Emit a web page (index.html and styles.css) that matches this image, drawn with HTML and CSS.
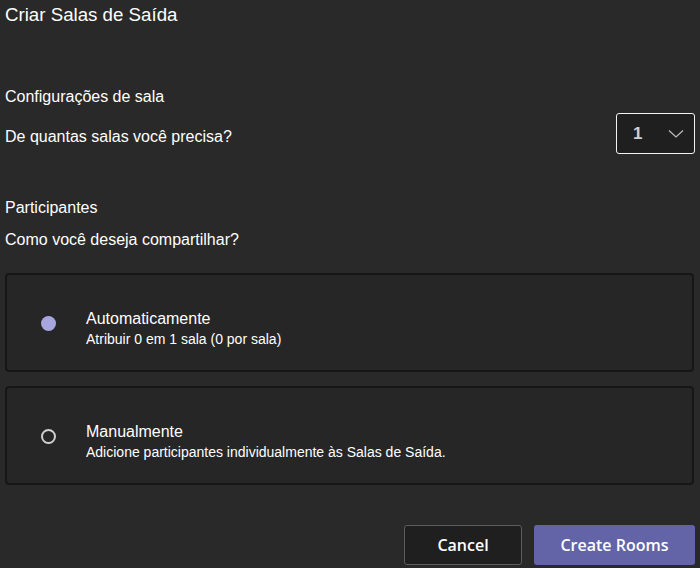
FILE: index.html
```html
<!DOCTYPE html>
<html lang="pt">
<head>
    <meta charset="UTF-8">
    <title>Criar Salas de Saída</title>
    <link rel="stylesheet" href="styles.css">
</head>
<body>
<div class="dialog">
    <h1 class="title">Criar Salas de Saída</h1>

    <div class="section rooms">
        <div class="label">Configurações de sala</div>
        <div class="row">
            <div class="question">De quantas salas você precisa?</div>
            <div class="select">
                <span class="num">1</span>
                <svg width="16" height="10" viewBox="0 0 16 10"><path d="M1 1.5 L8 8 L15 1.5" fill="none" stroke="#bdbdbd" stroke-width="1.2"/></svg>
            </div>
        </div>
    </div>

    <div class="section people">
        <div class="label">Participantes</div>
        <div class="question">Como você deseja compartilhar?</div>
    </div>

    <!--opções de atribuição-->
    <div class="option">
        <span class="radio on"></span>
        <div class="opt-text">
            <div class="opt-title">Automaticamente</div>
            <div class="opt-sub">Atribuir 0 em 1 sala (0 por sala)</div>
        </div>
    </div>
    <div class="option">
        <span class="radio"></span>
        <div class="opt-text">
            <div class="opt-title">Manualmente</div>
            <div class="opt-sub">Adicione participantes individualmente às Salas de Saída.</div>
        </div>
    </div>

    <div class="actions">
        <button class="btn cancel">Cancel</button>
        <button class="btn create">Create Rooms</button>
    </div>
</div>
</body>
</html>
```

FILE: styles.css
```css
* {
    margin: 0;
    padding: 0;
    box-sizing: border-box;
}

body {
    background-color: #292929;
    color: #ffffff;
    font-family: "Liberation Sans", Arial, sans-serif;
}

.dialog {
    padding: 0 6px 0 5px;
    height: 568px;
}

.title {
    font-size: 18.7px;
    font-weight: normal;
    line-height: 22px;
    padding-top: 4px;
}

.section {
    font-size: 16px;
}

.rooms {
    margin-top: 61px;
}

.label {
    line-height: 20px;
}

.row {
    display: flex;
    align-items: center;
    justify-content: space-between;
    margin-top: 6px;
}

.row .question {
    margin-top: 6px;
}

.question {
    line-height: 20px;
}

.select {
    width: 79px;
    height: 41px;
    border: 1.5px solid #f2f2f2;
    border-radius: 3px;
    background-color: #1f1f1f;
    display: flex;
    align-items: center;
    justify-content: space-between;
    padding: 0 10px 0 16px;
    margin-right: -1px;
}

.num {
    font-size: 17px;
    font-weight: bold;
    color: #d0d0d0;
}

.people {
    margin-top: 44px;
}

.people .question {
    margin-top: 12px;
}

.option {
    display: flex;
    align-items: center;
    height: 99px;
    margin-top: 23px;
    background-color: #262626;
    border: 2px solid #161616;
    border-radius: 4px;
    padding-left: 34px;
}

.option + .option {
    margin-top: 14px;
}

.radio {
    width: 15px;
    height: 15px;
    border-radius: 50%;
    border: 2px solid #cfcfcf;
    margin-right: 30px;
    margin-top: 1px;
}

.radio.on {
    border: 0;
    background-color: #a7a6de;
}

.opt-text {
    margin-top: 12px;
}

.opt-title {
    font-size: 16px;
    line-height: 20px;
}

.opt-sub {
    font-size: 14px;
    line-height: 17px;
    margin-top: 2px;
}

.actions {
    display: flex;
    justify-content: flex-end;
    gap: 12px;
    margin-top: 40px;
    margin-right: -1px;
}

.btn {
    height: 40px;
    border-radius: 3px;
    font-family: "Open Sans", "Noto Sans", sans-serif;
    font-size: 16px;
    font-weight: 600;
    color: #ffffff;
}

.cancel {
    width: 118px;
    background-color: #1f1f1f;
    border: 1.5px solid #5c5c5c;
}

.create {
    width: 161px;
    background-color: #6264a7;
    border: 0;
}
```
